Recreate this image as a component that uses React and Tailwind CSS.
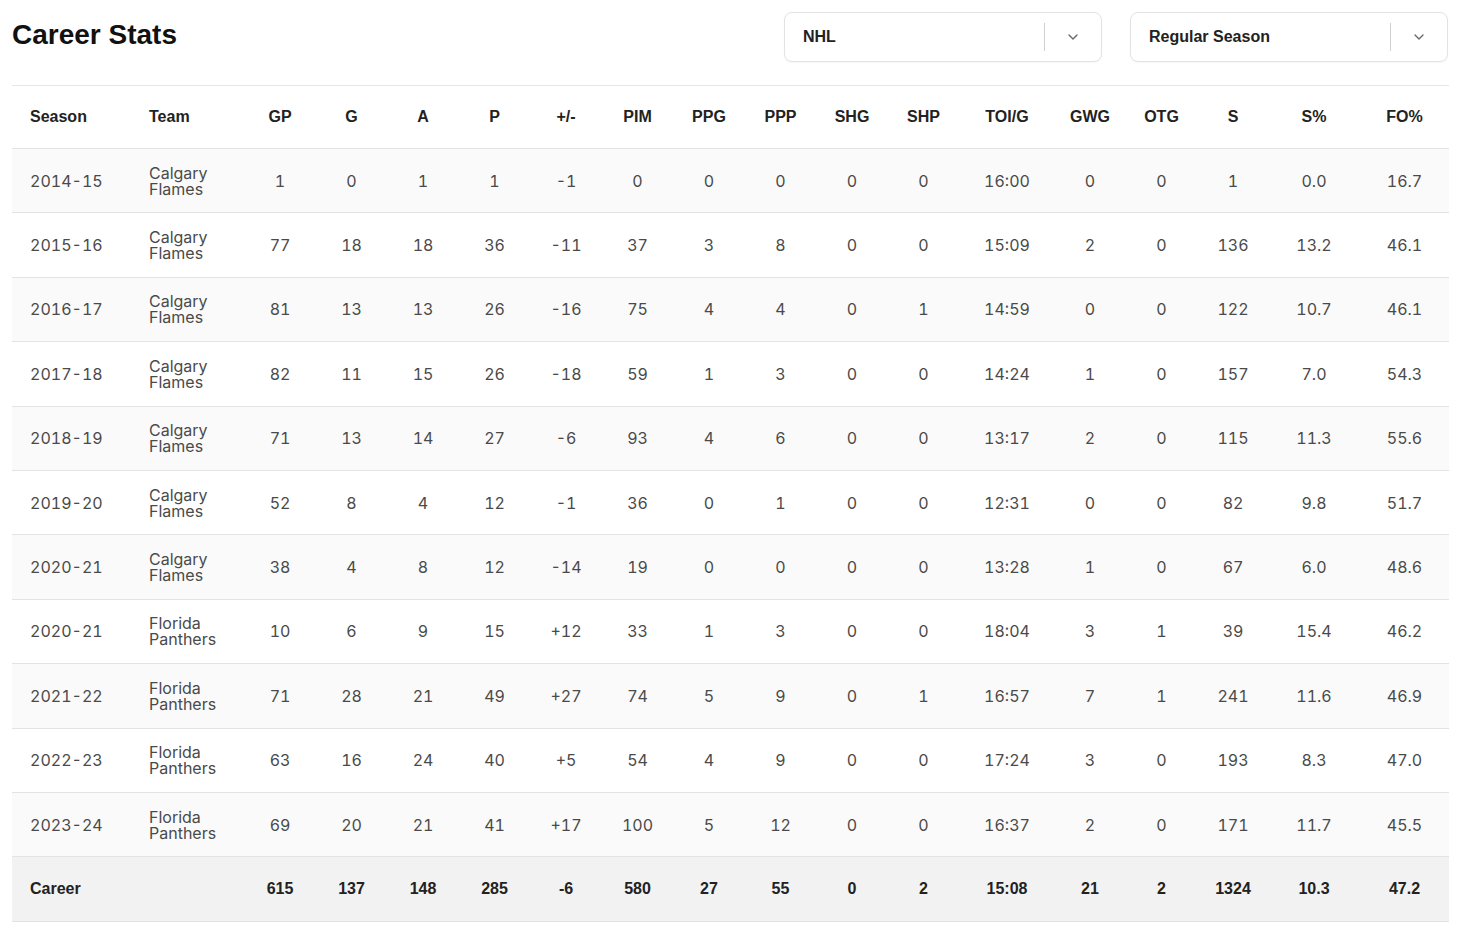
import { ChevronDown } from "lucide-react";

const rows = [
  ["2014-15", "Calgary Flames", 1, 0, 1, 1, "-1", 0, 0, 0, 0, 0, "16:00", 0, 0, 1, "0.0", "16.7"],
  ["2015-16", "Calgary Flames", 77, 18, 18, 36, "-11", 37, 3, 8, 0, 0, "15:09", 2, 0, 136, "13.2", "46.1"],
  ["2016-17", "Calgary Flames", 81, 13, 13, 26, "-16", 75, 4, 4, 0, 1, "14:59", 0, 0, 122, "10.7", "46.1"],
  ["2017-18", "Calgary Flames", 82, 11, 15, 26, "-18", 59, 1, 3, 0, 0, "14:24", 1, 0, 157, "7.0", "54.3"],
  ["2018-19", "Calgary Flames", 71, 13, 14, 27, "-6", 93, 4, 6, 0, 0, "13:17", 2, 0, 115, "11.3", "55.6"],
  ["2019-20", "Calgary Flames", 52, 8, 4, 12, "-1", 36, 0, 1, 0, 0, "12:31", 0, 0, 82, "9.8", "51.7"],
  ["2020-21", "Calgary Flames", 38, 4, 8, 12, "-14", 19, 0, 0, 0, 0, "13:28", 1, 0, 67, "6.0", "48.6"],
  ["2020-21", "Florida Panthers", 10, 6, 9, 15, "+12", 33, 1, 3, 0, 0, "18:04", 3, 1, 39, "15.4", "46.2"],
  ["2021-22", "Florida Panthers", 71, 28, 21, 49, "+27", 74, 5, 9, 0, 1, "16:57", 7, 1, 241, "11.6", "46.9"],
  ["2022-23", "Florida Panthers", 63, 16, 24, 40, "+5", 54, 4, 9, 0, 0, "17:24", 3, 0, 193, "8.3", "47.0"],
  ["2023-24", "Florida Panthers", 69, 20, 21, 41, "+17", 100, 5, 12, 0, 0, "16:37", 2, 0, 171, "11.7", "45.5"],
];

const career = ["Career", "", 615, 137, 148, 285, "-6", 580, 27, 55, 0, 2, "15:08", 21, 2, 1324, "10.3", "47.2"];

const headers = ["Season", "Team", "GP", "G", "A", "P", "+/-", "PIM", "PPG", "PPP", "SHG", "SHP", "TOI/G", "GWG", "OTG", "S", "S%", "FO%"];

const widths = [119, 113, 72, 71, 72, 71, 72, 71, 72, 71, 72, 71, 96, 70, 73, 70, 92, 89];

function Select({ label }) {
  return (
    <div className="flex items-center h-[50px] w-[318px] rounded-lg border border-[#e3e3e3] bg-white shadow-[0_1px_2px_rgba(0,0,0,0.04)] pl-[18px] pr-[20px]">
      <span className="flex-1 text-[16px] font-bold text-[#222] font-['Liberation_Sans',sans-serif]">{label}</span>
      <span className="h-[28px] w-px bg-[#d0d0d0] mr-[20px]"></span>
      <ChevronDown size={16} className="text-[#666]" strokeWidth={2} />
    </div>
  );
}

export default function App() {
  return (
    <div className="w-[1460px] h-[930px] bg-white px-[12px] pt-[12px] font-['Inter',sans-serif]">
      <div className="flex items-start">
        <h1 className="flex-1 text-[28px] font-bold text-[#111] font-['Liberation_Sans',sans-serif] leading-[46px]">
          Career Stats
        </h1>
        <Select label="NHL" />
        <div className="w-[28px]"></div>
        <Select label="Regular Season" />
      </div>
      <table className="mt-[23px] w-[1437px] table-fixed border-collapse border-t border-[#e6e6e6]">
        <colgroup>
          {widths.map((w, i) => (
            <col key={i} style={{ width: w }} />
          ))}
        </colgroup>
        <thead>
          <tr className="h-[63px] border-b border-[#e3e3e3]">
            {headers.map((h, i) => (
              <th
                key={h}
                className={`text-[16px] font-bold text-[#222] font-['Liberation_Sans',sans-serif] ${
                  i < 2 ? "text-left pl-[18px]" : "text-center"
                }`}
              >
                {h}
              </th>
            ))}
          </tr>
        </thead>
        <tbody>
          {rows.map((r, ri) => (
            <tr key={ri} className={`h-[64.4px] border-b border-[#e3e3e3] ${ri % 2 === 0 ? "bg-[#fafafa]" : "bg-white"}`}>
              {r.map((c, ci) => (
                <td
                  key={ci}
                  className={`text-[16px] text-[#4a4a4a] tabular-nums ${
                    ci === 0 ? "text-left pl-[18px]" : ci === 1 ? "text-left pl-[18px] leading-[16px]" : "text-center"
                  }`}
                >
                  {ci === 1 ? <span className="block w-[80px]">{c}</span> : c}
                </td>
              ))}
            </tr>
          ))}
          <tr className="h-[65px] border-b border-[#e3e3e3] bg-[#f2f2f2]">
            {career.map((c, ci) => (
              <td
                key={ci}
                className={`text-[16px] font-bold text-[#222] font-['Liberation_Sans',sans-serif] ${
                  ci < 2 ? "text-left pl-[18px]" : "text-center"
                }`}
              >
                {c}
              </td>
            ))}
          </tr>
        </tbody>
      </table>
    </div>
  );
}
